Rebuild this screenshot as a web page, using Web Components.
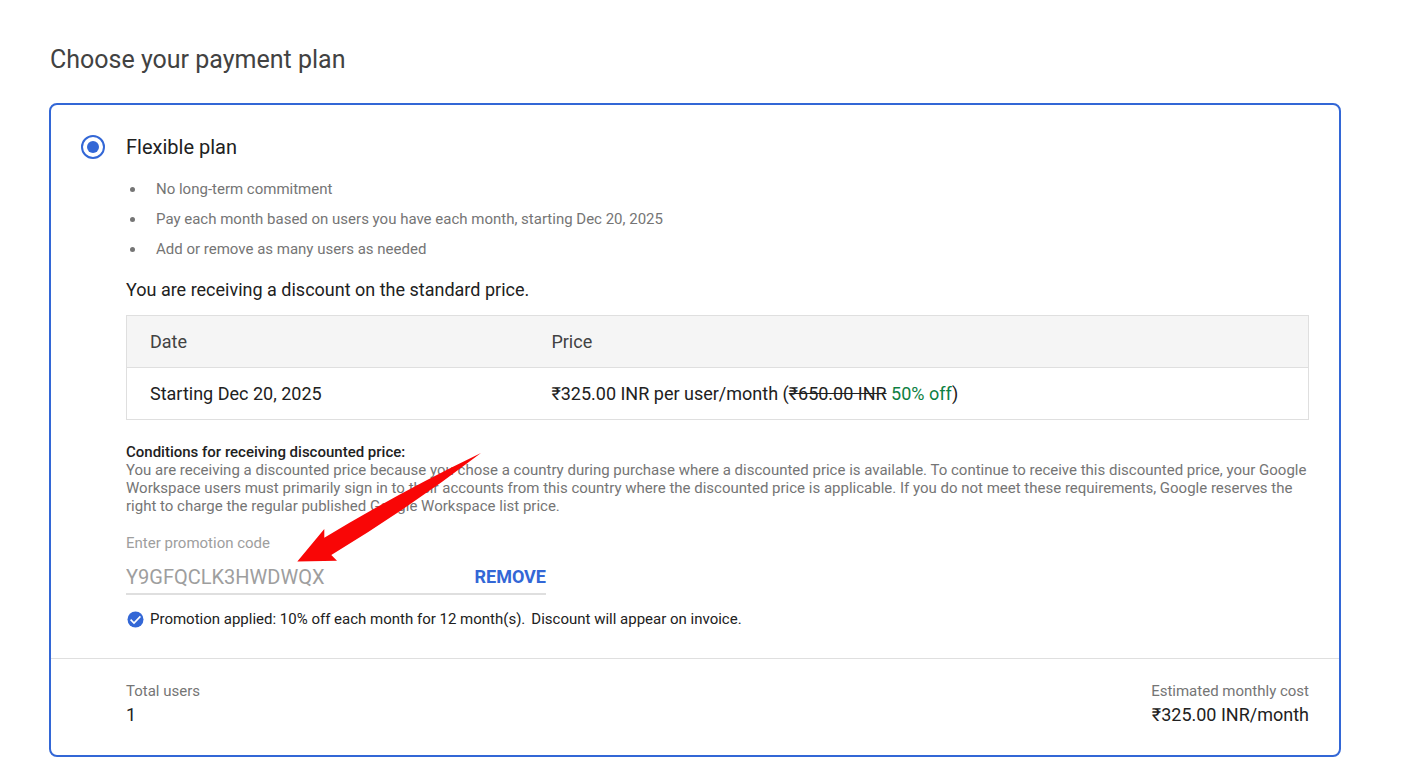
<!DOCTYPE html>
<html lang="en">
<head>
<meta charset="utf-8">
<meta name="viewport" content="width=device-width, initial-scale=1">
<title>Choose your payment plan</title>
<style>
    body {
        --blue: #3367d6;
        --ink: #212121;
        --ink-soft: #424242;
        --muted: #757575;
        --faint: #9e9e9e;
        --line: #dfdfdf;
        --green: #0d8043;

        margin: 0;
        background: #fff;
        color: var(--ink);
        font: 15px/18px Roboto, "Noto Sans", sans-serif;
    }
</style>
</head>
<body>
<payment-page>
    <span slot="title">Choose your payment plan</span>
    <plan-card>
        <span slot="name">Flexible plan</span>
        <plan-feature>No long-term commitment</plan-feature>
        <plan-feature>Pay each month based on users you have each month, starting Dec 20, 2025</plan-feature>
        <plan-feature>Add or remove as many users as needed</plan-feature>
        <div slot="details">
            <price-table date="Starting Dec 20, 2025" price="₹325.00 INR" list-price="₹650.00 INR" discount="50% off">You are receiving a discount on the standard price.</price-table>
            <price-conditions>
                <span slot="heading">Conditions for receiving discounted price:</span>
                You are receiving a discounted price because you chose a country during purchase where a discounted price is available. To continue to receive this discounted price, your Google Workspace users must primarily sign in to their accounts from this country where the discounted price is applicable. If you do not meet these requirements, Google reserves the right to charge the regular published Google Workspace list price.
            </price-conditions>
            <promo-code code="Y9GFQCLK3HWDWQX">
                Promotion applied: 10% off each month for 12 month(s).
                <span slot="note">Discount will appear on invoice.</span>
            </promo-code>
        </div>
        <plan-total slot="total" label="Total users">1</plan-total>
        <plan-total slot="total" label="Estimated monthly cost" align="end">₹325.00 INR/month</plan-total>
    </plan-card>
</payment-page>

<script>
class PaymentPage extends HTMLElement {
    constructor() {
        super();
        this.attachShadow({mode: "open"});
    }

    static get styles() {
        return /* css */`
            :host {
                display: block;
                padding: 44px 80px 10px 49px;
            }

            h1 {
                margin: 0 0 27px 1px;
                color: var(--ink-soft);
                font-size: 25px;
                font-weight: 400;
                line-height: 32px;
            }
        `;
    }

    connectedCallback() {
        this.shadowRoot.innerHTML = /* html */`
        <style>${PaymentPage.styles}</style>
        <h1><slot name="title"></slot></h1>
        <slot></slot>
        `;
    }
}

class PlanCard extends HTMLElement {
    constructor() {
        super();
        this.attachShadow({mode: "open"});
    }

    static get styles() {
        return /* css */`
            :host {
                display: block;
                border: 2px solid var(--blue);
                border-radius: 8px;
            }

            .plan {
                display: grid;
                grid-template-columns: 24px minmax(0, 1fr);
                column-gap: 21px;
                padding: 30px;
            }

            input {
                appearance: none;
                box-sizing: border-box;
                width: 24px;
                height: 24px;
                margin: 0;
                padding: 4px;
                border: 2px solid var(--blue);
                border-radius: 50%;
            }

            input:checked {
                background: var(--blue) content-box;
            }

            label {
                font-size: 20px;
                line-height: 24px;
            }

            .body {
                grid-column: 2;
            }

            ul {
                margin: 15px 0 16px;
                padding: 0;
                list-style: none;
            }

            .totals {
                display: flex;
                justify-content: space-between;
                padding: 20px 30px 28px 75px;
                border-top: 1px solid var(--line);
            }
        `;
    }

    connectedCallback() {
        this.shadowRoot.innerHTML = /* html */`
        <style>${PlanCard.styles}</style>
        <div class="plan">
            <input type="radio" id="plan" name="plan" checked>
            <label for="plan"><slot name="name"></slot></label>
            <div class="body">
                <ul role="list"><slot></slot></ul>
                <slot name="details"></slot>
            </div>
        </div>
        <div class="totals"><slot name="total"></slot></div>
        `;
    }
}

class PlanFeature extends HTMLElement {
    constructor() {
        super();
        this.attachShadow({mode: "open"});
    }

    static get styles() {
        return /* css */`
            :host {
                display: flex;
                align-items: center;
                gap: 21px;
                padding-left: 4px;
                color: var(--muted);
                line-height: 30px;
            }

            :host::before {
                content: "";
                width: 5px;
                height: 5px;
                border-radius: 50%;
                background: currentColor;
            }
        `;
    }

    connectedCallback() {
        this.setAttribute("role", "listitem");
        this.shadowRoot.innerHTML = /* html */`
        <style>${PlanFeature.styles}</style>
        <span><slot></slot></span>
        `;
    }
}

class PriceTable extends HTMLElement {
    constructor() {
        super();
        this.attachShadow({mode: "open"});
    }

    static get styles() {
        return /* css */`
            :host {
                display: block;
                font-size: 18px;
                line-height: 20px;
            }

            table {
                width: 100%;
                margin-top: 15px;
                border: 1px solid var(--line);
                border-collapse: collapse;
                table-layout: fixed;
            }

            th, td {
                height: 52px;
                box-sizing: border-box;
                padding: 0 0 0 23px;
                text-align: left;
                font-weight: 400;
            }

            th {
                background: #f5f5f5;
                border-bottom: 1px solid var(--line);
                color: var(--ink-soft);
            }

            th:first-child {
                width: 34%;
            }

            .off {
                color: var(--green);
            }
        `;
    }

    connectedCallback() {
        this.shadowRoot.innerHTML = /* html */`
        <style>${PriceTable.styles}</style>
        <slot></slot>
        <table>
            <thead>
                <tr><th>Date</th><th>Price</th></tr>
            </thead>
            <tbody>
                <tr>
                    <td>${this.getAttribute("date")}</td>
                    <td>${this.getAttribute("price")} per user/month (<s>${this.getAttribute("list-price")}</s> <span class="off">${this.getAttribute("discount")}</span>)</td>
                </tr>
            </tbody>
        </table>
        `;
    }
}

class PriceConditions extends HTMLElement {
    constructor() {
        super();
        this.attachShadow({mode: "open"});
    }

    static get styles() {
        return /* css */`
            :host {
                display: block;
                margin-top: 23px;
                color: var(--muted);
            }

            h2 {
                margin: 0;
                color: var(--ink);
                font-size: 15px;
                font-weight: 500;
            }

            p {
                margin: 0;
            }
        `;
    }

    connectedCallback() {
        this.shadowRoot.innerHTML = /* html */`
        <style>${PriceConditions.styles}</style>
        <h2><slot name="heading"></slot></h2>
        <p><slot></slot></p>
        `;
    }
}

class PromoCode extends HTMLElement {
    constructor() {
        super();
        this.attachShadow({mode: "open"});
    }

    static get styles() {
        return /* css */`
            :host {
                display: block;
                position: relative;
                margin-top: 19px;
            }

            label {
                display: block;
                color: var(--faint);
            }

            .field {
                display: flex;
                align-items: flex-end;
                width: 420px;
                max-width: 100%;
                height: 43px;
                border-bottom: 2px solid var(--line);
                box-sizing: border-box;
            }

            input, button {
                padding: 0 0 4px;
                border: 0;
                background: none;
                font: inherit;
                line-height: 24px;
            }

            input {
                flex: 1;
                min-width: 0;
                color: var(--faint);
                font-size: 20px;
            }

            button {
                color: var(--blue);
                font-size: 18px;
                font-weight: 700;
            }

            .status {
                display: flex;
                align-items: center;
                gap: 6px;
                margin-top: 15px;
                padding-left: 1px;
            }

            .check {
                width: 17px;
                height: 17px;
                flex: none;
            }

            /* Arrow drawn over the text, pointing at the code */
            .pointer {
                position: absolute;
                left: 170px;
                top: -82px;
                width: 186px;
                height: 111px;
                pointer-events: none;
            }
        `;
    }

    connectedCallback() {
        this.shadowRoot.innerHTML = /* html */`
        <style>${PromoCode.styles}</style>
        <label for="code">Enter promotion code</label>
        <div class="field">
            <input id="code" type="text" value="${this.getAttribute("code")}" readonly>
            <button type="button">REMOVE</button>
        </div>
        <div class="status">
            <svg class="check" viewBox="0 0 17 17" aria-hidden="true">
                <circle cx="8.5" cy="8.5" r="8" fill="#3367d6"/>
                <path d="M3.6 8.6 7 12l6.4-6.6" fill="none" stroke="#fff" stroke-width="1.6"/>
            </svg>
            <span><slot></slot></span>
            <slot name="note"></slot>
        </div>
        <svg class="pointer" viewBox="0 0 186 111" aria-hidden="true">
            <path d="M185 1Q104 40 28.3 85.7V77L1.3 109.6 41 108.8 35.3 103Q113 56 185 1z" fill="#f90606"/>
        </svg>
        `;
    }
}

class PlanTotal extends HTMLElement {
    constructor() {
        super();
        this.attachShadow({mode: "open"});
    }

    static get styles() {
        return /* css */`
            :host {
                display: block;
                line-height: 24px;
            }

            :host([align="end"]) {
                text-align: right;
            }

            .label {
                color: var(--muted);
            }

            .value {
                font-size: 18px;
            }
        `;
    }

    connectedCallback() {
        this.shadowRoot.innerHTML = /* html */`
        <style>${PlanTotal.styles}</style>
        <div class="label">${this.getAttribute("label")}</div>
        <div class="value"><slot></slot></div>
        `;
    }
}

customElements.define("payment-page", PaymentPage);
customElements.define("plan-card", PlanCard);
customElements.define("plan-feature", PlanFeature);
customElements.define("price-table", PriceTable);
customElements.define("price-conditions", PriceConditions);
customElements.define("promo-code", PromoCode);
customElements.define("plan-total", PlanTotal);
</script>
</body>
</html>
